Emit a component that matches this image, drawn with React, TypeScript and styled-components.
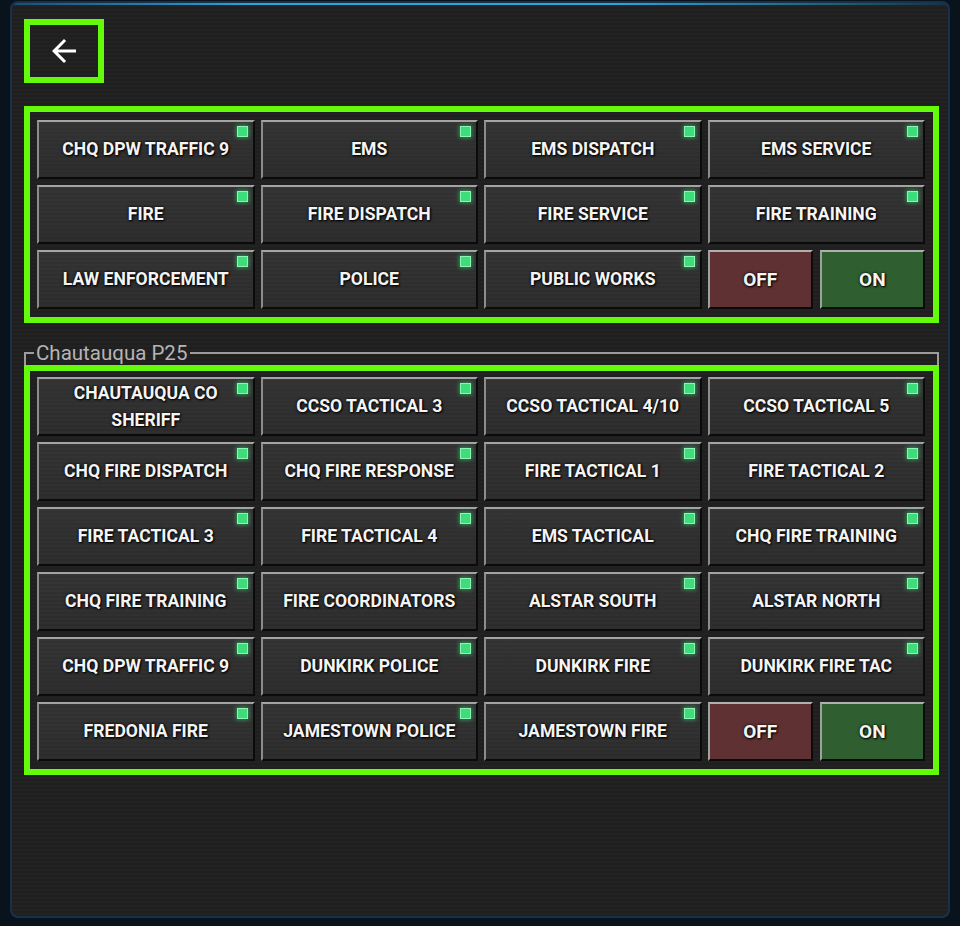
import styled, { createGlobalStyle } from 'styled-components'
import { MdArrowBack } from 'react-icons/md'

const GlobalStyle = createGlobalStyle`
  html, body {
    margin: 0;
    padding: 0;
    background: #09131b;
    font-family: Roboto, 'Noto Sans', 'Liberation Sans', sans-serif;
  }
  * {
    box-sizing: border-box;
  }
`

const Panel = styled.div`
  margin: 1px 10px 0;
  height: 917px;
  border: 2px solid #17314d;
  border-radius: 8px;
  padding: 16px 9px 0 12px;
  background:
    linear-gradient(90deg, #1b4f73 0%, #2aa3d9 25%, #2aa3d9 65%, #1d5a6a 90%, #17314d 100%) top / 100% 2px no-repeat,
    repeating-linear-gradient(180deg, #1f1f1f 0px, #1f1f1f 2px, #222 2px, #222 4px);
  display: flex;
  flex-direction: column;
  align-items: flex-start;
`

const BackButton = styled.button`
  width: 80px;
  height: 64px;
  border: 6px solid #64fb0a;
  background: transparent;
  color: #fff;
  display: flex;
  align-items: center;
  justify-content: center;
  padding: 0;
  cursor: pointer;
`

const Group = styled.div<{ $padTop: number }>`
  align-self: stretch;
  border: 6px solid #64fb0a;
  padding: ${({ $padTop }) => $padTop}px 8px 8px 7px;
  display: grid;
  grid-template-columns: repeat(4, 1fr);
  grid-auto-rows: 59px;
  gap: 6px;
`

const TopGroup = styled(Group)`
  margin-top: 23px;
`

const Fieldset = styled.fieldset`
  align-self: stretch;
  margin: 20px 0 0;
  padding: 2px 0 0;
  border: 2px solid #9c9c9c;
  border-bottom: 0;
  min-width: 0;
`

const Legend = styled.legend`
  margin-left: 8px;
  padding: 0 3px 0 2px;
  font-size: 20.5px;
  line-height: 20px;
  color: #b4b4b4;
`

const FieldGroup = styled(Group)`
  margin: 0 -2px;
`

const Channel = styled.button`
  position: relative;
  border: 2px solid;
  border-color: #a4a4a4 #0b0b0b #0b0b0b #8c8c8c;
  background:
    repeating-linear-gradient(180deg, rgba(255, 255, 255, 0.015) 0px, rgba(255, 255, 255, 0.015) 2px, transparent 2px, transparent 4px),
    linear-gradient(180deg, #323232 0%, #2b2b2b 100%);
  color: #f4f4f4;
  font-family: Roboto, 'Noto Sans', 'Liberation Sans', sans-serif;
  font-weight: 700;
  font-size: 17.6px;
  line-height: 27px;
  text-transform: uppercase;
  text-shadow: 0 0 3px #000, 1px 1px 2px #000;
  padding: 0 20px;
  display: flex;
  align-items: center;
  justify-content: center;
  text-align: center;
  cursor: pointer;
`

const Led = styled.span`
  position: absolute;
  top: 4px;
  right: 5px;
  width: 11px;
  height: 11px;
  background: #3fdc7c;
  border: 1px solid #8cf5b4;
  box-shadow: 0 0 4px 1px rgba(55, 220, 120, 0.55);
`

const SwitchCell = styled.div`
  display: grid;
  grid-template-columns: 1fr 1fr;
  gap: 7px;
`

const Toggle = styled.button<{ $on?: boolean }>`
  border: 2px solid;
  border-color: #b0b0b0 #0b0b0b #0b0b0b #a0a0a0;
  background: ${({ $on }) => ($on ? '#2f5f31' : '#5f3132')};
  color: #f4f4f4;
  font-family: Roboto, 'Noto Sans', 'Liberation Sans', sans-serif;
  font-weight: 700;
  font-size: 19px;
  text-shadow: 0 0 3px #000, 1px 1px 2px #000;
  cursor: pointer;
`

const topChannels = [
  'CHQ DPW TRAFFIC 9',
  'EMS',
  'EMS DISPATCH',
  'EMS SERVICE',
  'FIRE',
  'FIRE DISPATCH',
  'FIRE SERVICE',
  'FIRE TRAINING',
  'LAW ENFORCEMENT',
  'POLICE',
  'PUBLIC WORKS',
]

const p25Channels = [
  'CHAUTAUQUA CO SHERIFF',
  'CCSO TACTICAL 3',
  'CCSO TACTICAL 4/10',
  'CCSO TACTICAL 5',
  'CHQ FIRE DISPATCH',
  'CHQ FIRE RESPONSE',
  'FIRE TACTICAL 1',
  'FIRE TACTICAL 2',
  'FIRE TACTICAL 3',
  'FIRE TACTICAL 4',
  'EMS TACTICAL',
  'CHQ FIRE TRAINING',
  'CHQ FIRE TRAINING',
  'FIRE COORDINATORS',
  'ALSTAR SOUTH',
  'ALSTAR NORTH',
  'CHQ DPW TRAFFIC 9',
  'DUNKIRK POLICE',
  'DUNKIRK FIRE',
  'DUNKIRK FIRE TAC',
  'FREDONIA FIRE',
  'JAMESTOWN POLICE',
  'JAMESTOWN FIRE',
]

const ChannelButtons = ({ names }: { names: string[] }) => (
  <>
    {names.map((name, i) => (
      <Channel key={i}>
        {name}
        <Led />
      </Channel>
    ))}
    <SwitchCell>
      <Toggle>OFF</Toggle>
      <Toggle $on>ON</Toggle>
    </SwitchCell>
  </>
)

export default function App() {
  return (
    <>
      <GlobalStyle />
      <Panel>
        <BackButton aria-label="Back">
          <MdArrowBack size={36} />
        </BackButton>

        <TopGroup $padTop={8}>
          <ChannelButtons names={topChannels} />
        </TopGroup>

        <Fieldset>
          <Legend>Chautauqua P25</Legend>
          <FieldGroup $padTop={6}>
            <ChannelButtons names={p25Channels} />
          </FieldGroup>
        </Fieldset>
      </Panel>
    </>
  )
}
